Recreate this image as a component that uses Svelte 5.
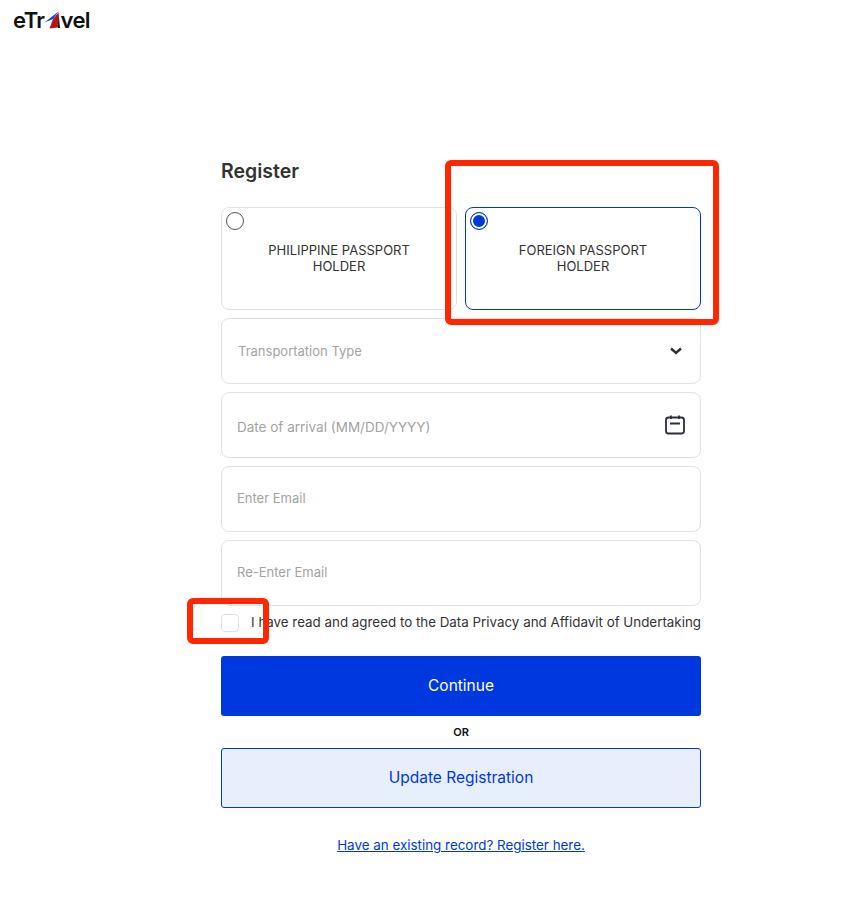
<script>
	const passports = [
		{ label: 'PHILIPPINE PASSPORT', second: 'HOLDER', selected: false },
		{ label: 'FOREIGN PASSPORT', second: 'HOLDER', selected: true }
	];
</script>

<div class="page">
	<header class="top">
		<span class="logo">eTr<svg class="logo-a" viewBox="0 0 17 18" width="17" height="18">
				<path d="M14.5 0.5 L0.5 11.5 L9 8 Z" fill="#0a3fe0" />
				<path d="M14.5 1.5 L9 8 L5.5 17.5 L14 16.5 Z" fill="#b5121b" />
				<path d="M14.4 0.5 L14 17 H16 Z" fill="#111" />
			</svg>vel</span>
	</header>

	<main class="form">
		<h1>Register</h1>

		<div class="cards">
			{#each passports as p}
				<div class="card" class:selected={p.selected}>
					<span class="radio"></span>
					<div class="card-label">{p.label}<br />{p.second}</div>
				</div>
			{/each}
		</div>

		<div class="field"><span>Transportation Type</span>
			<svg class="chev" width="14" height="10" viewBox="0 0 14 10" fill="none" stroke="#2c2f38" stroke-width="2.4">
				<path d="M2 2.5 L7 7 L12 2.5" />
			</svg>
		</div>
		<div class="field date"><span class="date-text">Date of arrival (MM/DD/YYYY)</span>
			<svg class="cal" width="22" height="22" viewBox="0 0 22 22" fill="none" stroke="#2c2f38" stroke-width="1.8">
				<rect x="2" y="3.5" width="18" height="16" rx="2.5" />
				<path d="M7 1.5 V5 M15 1.5 V5 M6 9.5 H16" />
			</svg>
		</div>
		<div class="field email"><span>Enter Email</span></div>
		<div class="field email"><span>Re-Enter Email</span></div>

		<div class="agree">
			<span class="check"></span>
			<span class="agree-text">I have read and agreed to the Data Privacy and Affidavit of Undertaking</span>
		</div>

		<button class="btn primary">Continue</button>
		<div class="or">OR</div>
		<button class="btn secondary">Update Registration</button>

		<a class="link" href="#top">Have an existing record? Register here.</a>
	</main>

	<div class="mark mark-card"></div>
	<div class="mark mark-check"></div>
</div>

<style>
	:global(body) {
		margin: 0;
		background: #fff;
	}

	.page {
		position: relative;
		height: 903px;
		font-family: 'Inter', 'Liberation Sans', sans-serif;
		color: #2c2f38;
		overflow: hidden;
	}

	.top {
		padding: 8px 0 0 13px;
		height: 33px;
		box-sizing: border-box;
	}

	.logo {
		display: inline-flex;
		align-items: center;
		font-size: 22px;
		font-weight: 600;
		line-height: 24px;
		color: #111;
		letter-spacing: -0.6px;
	}

	.logo-a {
		margin: 0 0 0 -1px;
	}

	.form {
		width: 480px;
		margin: 0 0 0 221px;
		padding-top: 125px;
		display: flex;
		flex-direction: column;
	}

	h1 {
		margin: 0 0 23px;
		font-size: 19.5px;
		line-height: 26px;
		font-weight: 600;
		color: #333;
	}

	.cards {
		display: grid;
		grid-template-columns: 1fr 1fr;
		gap: 8px;
		margin-bottom: 8px;
	}

	.card {
		height: 103px;
		box-sizing: border-box;
		border: 1px solid #e2e2e2;
		border-radius: 8px;
		padding: 4px;
	}

	.card.selected {
		border-color: #0038e0;
	}

	.radio {
		display: block;
		width: 18px;
		height: 18px;
		box-sizing: border-box;
		border: 1px solid #555;
		border-radius: 50%;
	}

	.selected .radio {
		border-color: #0038e0;
		background: #0038e0;
		box-shadow: inset 0 0 0 2px #fff;
	}

	.card-label {
		margin-top: 12px;
		text-align: center;
		font-size: 13px;
		line-height: 16px;
		color: #333;
	}

	.field {
		height: 66px;
		box-sizing: border-box;
		border: 1px solid #e2e2e2;
		border-radius: 8px;
		margin-bottom: 8px;
		padding: 0 17px 0 16px;
		display: flex;
		align-items: center;
		justify-content: space-between;
		font-size: 13px;
		color: #a3a3a3;
	}

	.date {
		font-size: 13.5px;
		padding-left: 15px;
	}

	.date-text {
		margin-top: 4px;
	}

	.cal {
		margin-right: -3px;
	}

	.email {
		padding-left: 15px;
	}

	.email span {
		position: relative;
		top: -1px;
	}

	.agree {
		display: flex;
		align-items: center;
		justify-content: space-between;
		height: 18px;
		font-size: 13.37px;
		color: #333;
		white-space: nowrap;
	}

	.agree-text {
		margin-top: -2px;
	}

	.check {
		width: 18px;
		height: 18px;
		box-sizing: border-box;
		border: 1px solid #e0e0e0;
		border-radius: 4px;
	}

	.btn {
		height: 60px;
		box-sizing: border-box;
		padding-bottom: 3px;
		font-family: inherit;
		font-size: 15.5px;
		font-weight: 400;
		border-radius: 3px;
		display: block;
		width: 100%;
	}

	.primary {
		margin-top: 24px;
		border: none;
		background: #0038e0;
		color: #fff;
	}

	.secondary {
		border: 1px solid #0038e0;
		background: #e7eefc;
		color: #0038e0;
	}

	.or {
		height: 32px;
		line-height: 32px;
		text-align: center;
		font-size: 11px;
		font-weight: 600;
		color: #111;
	}

	.link {
		margin-top: 28px;
		text-align: center;
		font-size: 13.4px;
		line-height: 18px;
		color: #0038e0;
	}

	.mark {
		position: absolute;
		box-sizing: border-box;
		border: 6px solid #ff2600;
		border-radius: 6px;
		pointer-events: none;
	}

	.mark-card {
		left: 445px;
		top: 160px;
		width: 274px;
		height: 165px;
	}

	.mark-check {
		left: 187px;
		top: 598px;
		width: 82px;
		height: 46px;
	}
</style>
